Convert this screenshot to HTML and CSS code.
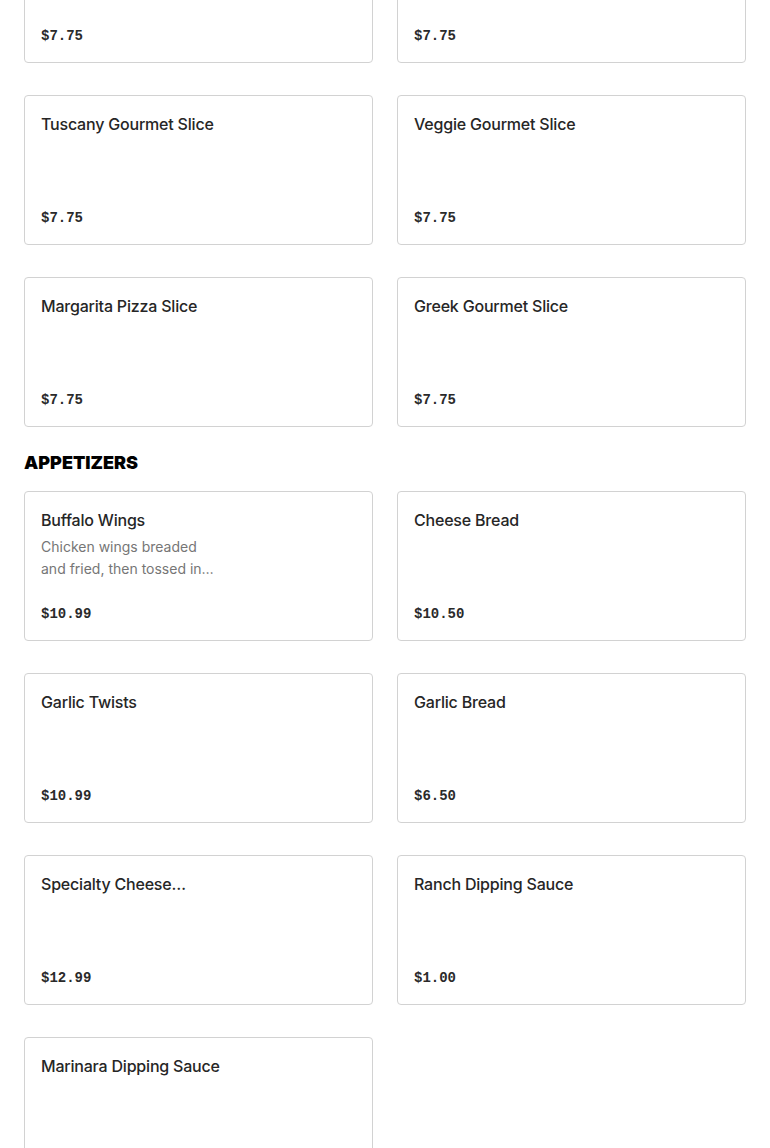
FILE: index.html
```html
<!DOCTYPE html>
<html>
<head>
<meta charset="utf-8">
<link rel="stylesheet" href="styles.css">
</head>
<body>
<main class="menu">
  <section class="section section-scrolled">
    <div class="grid">
      <div class="card card-end"><div class="price">$7.75</div></div>
      <div class="card card-end"><div class="price">$7.75</div></div>
      <div class="card"><div class="info"><div class="name">Tuscany Gourmet Slice</div></div><div class="price">$7.75</div></div>
      <div class="card"><div class="info"><div class="name">Veggie Gourmet Slice</div></div><div class="price">$7.75</div></div>
      <div class="card"><div class="info"><div class="name">Margarita Pizza Slice</div></div><div class="price">$7.75</div></div>
      <div class="card"><div class="info"><div class="name">Greek Gourmet Slice</div></div><div class="price">$7.75</div></div>
    </div>
  </section>
  <section class="section">
    <h2 class="section-title">APPETIZERS</h2>
    <div class="grid">
      <div class="card"><div class="info"><div class="name">Buffalo Wings</div><div class="desc">Chicken wings breaded and fried, then tossed in your choice of sauce</div></div><div class="price">$10.99</div></div>
      <div class="card"><div class="info"><div class="name">Cheese Bread</div></div><div class="price">$10.50</div></div>
      <div class="card"><div class="info"><div class="name">Garlic Twists</div></div><div class="price">$10.99</div></div>
      <div class="card"><div class="info"><div class="name">Garlic Bread</div></div><div class="price">$6.50</div></div>
      <div class="card"><div class="info"><div class="name">Specialty Cheese…</div></div><div class="price">$12.99</div></div>
      <div class="card"><div class="info"><div class="name">Ranch Dipping Sauce</div></div><div class="price">$1.00</div></div>
      <div class="card"><div class="info"><div class="name">Marinara Dipping Sauce</div></div><div class="price">$1.00</div></div>
    </div>
  </section>
</main>
</body>
</html>
```
FILE: styles.css
```css
* { box-sizing: border-box; }
body {
  margin: 0;
  background: #fff;
  font-family: Inter, "Noto Sans", "Liberation Sans", sans-serif;
  color: #2a2a2a;
}
.menu {
  padding: 0 24px;
}
.section-scrolled {
  margin-top: -87px;
}
.section-title {
  margin: 24px 0 16px;
  font-family: Inter, "Liberation Sans", sans-serif;
  font-weight: 900;
  font-size: 18px;
  line-height: 24px;
  letter-spacing: 0;
  color: #000;
}
.grid {
  display: grid;
  grid-template-columns: 1fr 1fr;
  column-gap: 24px;
  row-gap: 32px;
}
.card {
  height: 150px;
  border: 1px solid #d2d2d2;
  border-radius: 4px;
  padding: 16px;
  display: flex;
  flex-direction: column;
  justify-content: space-between;
}
.card-end {
  justify-content: flex-end;
}
.name {
  font-size: 16px;
  font-weight: 500;
  line-height: 24px;
  color: #262626;
  letter-spacing: -0.2px;
}
.desc {
  margin-top: 4px;
  width: 180px;
  font-size: 14px;
  line-height: 22px;
  color: #767676;
  display: -webkit-box;
  -webkit-line-clamp: 2;
  -webkit-box-orient: vertical;
  overflow: hidden;
}
.price {
  font-family: "Liberation Mono", "DejaVu Sans Mono", monospace;
  font-weight: 700;
  font-size: 14px;
  line-height: 20px;
  color: #2a2a2a;
}
```
